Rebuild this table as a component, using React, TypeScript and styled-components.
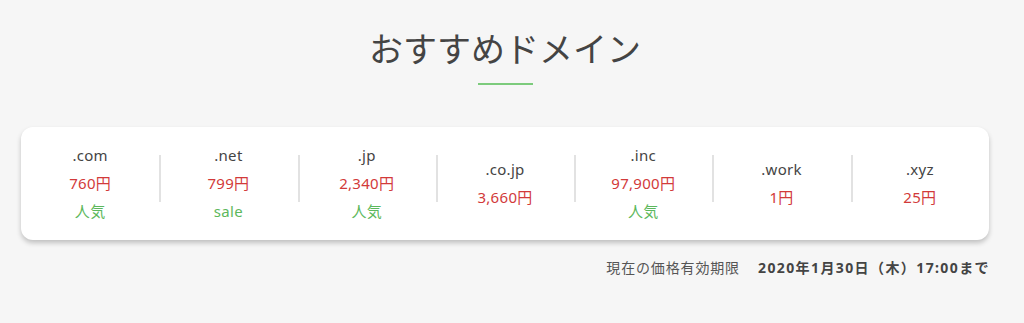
import React from "react";
import styled, { createGlobalStyle } from "styled-components";

const GlobalStyle = createGlobalStyle`
  html, body {
    margin: 0;
    padding: 0;
    background: #f6f6f6;
  }
  body {
    font-family: "Noto Sans", "Noto Sans CJK JP", sans-serif;
    color: #444;
  }
`;

const Page = styled.div`
  width: 1024px;
  height: 323px;
  box-sizing: border-box;
  padding: 24px 35px 0 21px;
  display: flex;
  flex-direction: column;
  align-items: stretch;
`;

const Title = styled.h2`
  margin: 0;
  text-align: center;
  font-family: "Noto Sans CJK JP", sans-serif;
  font-size: 34px;
  line-height: 48px;
  font-weight: 400;
  color: #444;
`;

const Rule = styled.div`
  width: 55px;
  height: 2px;
  background: #7ccb7c;
  margin: 11px auto 42px;
`;

const Card = styled.div`
  background: #fff;
  border-radius: 12px;
  box-shadow: 0 3px 5px rgba(0, 0, 0, 0.22);
  padding: 14px 0 15px;
  display: grid;
  grid-template-columns: repeat(7, 1fr);
  align-items: center;
`;

const Cell = styled.div<{ $first?: boolean }>`
  position: relative;
  display: flex;
  flex-direction: column;
  align-items: center;
  font-size: 15px;
  line-height: 28px;
  letter-spacing: 0.3px;
  &::before {
    content: "";
    display: ${(p) => (p.$first ? "none" : "block")};
    position: absolute;
    left: 0;
    top: 50%;
    margin-top: -28px;
    width: 2px;
    height: 47px;
    background: #e2e2e2;
  }
`;

const Name = styled.div`
  color: #444;
`;

const Price = styled.div`
  color: #d23a3a;
`;

const Tag = styled.div`
  color: #5cb85c;
`;

const Footer = styled.div`
  margin-top: 18px;
  display: flex;
  justify-content: flex-end;
  align-items: center;
  gap: 18px;
  font-size: 14px;
  line-height: 20px;
  color: #555;
`;

const Label = styled.span`
  letter-spacing: 0.85px;
`;

const Deadline = styled.span`
  font-weight: 700;
  color: #444;
  letter-spacing: 1.4px;
  margin-right: -1px;
`;

const domains = [
  { name: ".com", price: "760円", tag: "人気" },
  { name: ".net", price: "799円", tag: "sale" },
  { name: ".jp", price: "2,340円", tag: "人気" },
  { name: ".co.jp", price: "3,660円" },
  { name: ".inc", price: "97,900円", tag: "人気" },
  { name: ".work", price: "1円" },
  { name: ".xyz", price: "25円" },
];

export default function App() {
  return (
    <>
      <GlobalStyle />
      <Page>
        <Title>おすすめドメイン</Title>
        <Rule />
        <Card>
          {domains.map((d, i) => (
            <Cell key={d.name} $first={i === 0}>
              <Name>{d.name}</Name>
              <Price>{d.price}</Price>
              {d.tag && <Tag>{d.tag}</Tag>}
            </Cell>
          ))}
        </Card>
        <Footer>
          <Label>現在の価格有効期限</Label>
          <Deadline>2020年1月30日（木）17:00まで</Deadline>
        </Footer>
      </Page>
    </>
  );
}
